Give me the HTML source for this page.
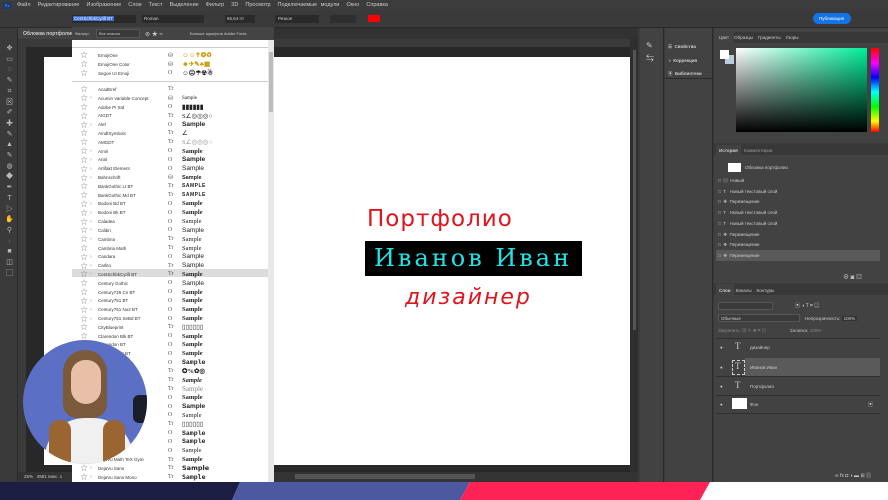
<!DOCTYPE html>
<html><head><meta charset="utf-8"><style>
*{margin:0;padding:0;box-sizing:border-box}
body{width:888px;height:500px;overflow:hidden;background:#282828;font-family:"Liberation Sans","Noto Sans CJK SC",sans-serif;position:relative;color:#ddd}
.a{position:absolute}
.t{font-size:5px;color:#ccc;white-space:nowrap}
.row{height:8.82px;display:flex;align-items:center;font-size:4.5px;color:#333;white-space:nowrap}
.row .s{width:12px;text-align:center;font-size:7px;color:#777;margin-left:6px}
.row .c{width:8px;color:#888;font-size:5px}
.row .n{width:70px}
.row .i{width:14px;font-size:6px;color:#555;font-family:"Liberation Serif",serif}
.row .p{font-family:"Liberation Serif",serif;font-size:6.5px;font-weight:bold;color:#222}
</style></head><body>
<div class="a" style="left:0;top:0;width:888px;height:11px;background:#3c3c3c"></div>
<div class="a" style="left:3px;top:2px;width:8px;height:7px;background:#1c3a6e;color:#5af;font-size:4px;text-align:center;line-height:7px">Ps</div>
<div class="a t" style="left:17px;top:2px;font-size:5.5px;word-spacing:2px">Файл &nbsp;Редактирование &nbsp;Изображение &nbsp;Слои &nbsp;Текст &nbsp;Выделение &nbsp;Фильтр &nbsp;3D &nbsp;Просмотр &nbsp;Подключаемые модули &nbsp;Окно &nbsp;Справка</div>
<div class="a" style="left:0;top:11px;width:888px;height:17px;background:#3a3a3a;border-bottom:1px solid #2a2a2a"></div>
<div class="a" style="left:72px;top:15px;width:64px;height:8px;background:#2a2a2a"></div>
<div class="a t" style="left:73px;top:16px;background:#3a6fd0;color:#fff;font-size:4.5px;padding:0 1px">CentSchbkCyrill BT</div>
<div class="a" style="left:142px;top:15px;width:62px;height:8px;background:#2a2a2a"></div>
<div class="a t" style="left:144px;top:16px;font-size:4.5px">Roman</div>
<div class="a" style="left:225px;top:15px;width:30px;height:8px;background:#2a2a2a"></div>
<div class="a t" style="left:227px;top:16px;font-size:4.5px">65,64 пт</div>
<div class="a" style="left:275px;top:15px;width:44px;height:8px;background:#2a2a2a"></div>
<div class="a t" style="left:278px;top:16px;font-size:4.5px">Резкое</div>
<div class="a" style="left:330px;top:15px;width:26px;height:8px;background:#2e2e2e"></div>
<div class="a" style="left:368px;top:15px;width:12px;height:7px;background:#f00"></div>
<div class="a" style="left:813px;top:13px;width:38px;height:11px;border-radius:6px;background:#1473e6"></div>
<div class="a t" style="left:819px;top:16px;color:#fff;font-size:4.5px">Публикация</div>
<div class="a" style="left:18px;top:28px;width:620px;height:11px;background:#323232"></div>
<div class="a" style="left:18px;top:28px;width:60px;height:11px;background:#444"></div>
<div class="a t" style="left:23px;top:31px;font-size:5px;font-weight:bold">Обложка портфолио</div>
<div class="a" style="left:18px;top:39px;width:620px;height:8px;background:#3a3a3a"></div>
<div class="a" style="left:18px;top:47px;width:8px;height:433px;background:#3a3a3a"></div>
<div class="a" style="left:0;top:28px;width:18px;height:454px;background:#3a3a3a;border-right:1px solid #2a2a2a"></div>
<div class="a" style="left:5px;top:44px;width:9px;height:290px;color:#bbb;font-size:7px;line-height:10.7px;text-align:center">✥<br>▭<br>◌<br>✎<br>⌗<br>⊠<br>✐<br>✚<br>✎<br>▲<br>✎<br>◍<br>◆<br>✒<br>T<br>▷<br>✋<br>⚲<br>·<br>■<br>◫<br>▢</div>
<div class="a" style="left:44px;top:57px;width:586px;height:408px;background:#fff"></div>
<div class="a" style="left:630px;top:39px;width:8px;height:443px;background:#2e2e2e"></div>
<div class="a" style="left:633px;top:50px;width:3px;height:280px;background:#555"></div>
<div class="a" style="left:18px;top:472px;width:620px;height:10px;background:#333"></div>
<div class="a" style="left:295px;top:474px;width:180px;height:5px;background:#555"></div>
<div class="a t" style="left:24px;top:474px;font-size:4.5px">25% &nbsp; 4961 пикс. x</div>
<div class="a" style="left:367px;top:204px;font-family:'DejaVu Sans',sans-serif;font-size:23px;color:#e0141c;letter-spacing:1px;line-height:30px">Портфолио</div>
<div class="a" style="left:365px;top:241px;width:217px;height:35px;background:#000"></div>
<div class="a" style="left:374px;top:242px;font-family:'DejaVu Serif',serif;font-size:24px;color:#21e3e6;letter-spacing:3px;line-height:33px">Иванов Иван</div>
<div class="a" style="left:405px;top:283px;font-family:'DejaVu Sans',sans-serif;font-size:22px;font-style:italic;color:#e0141c;letter-spacing:2px;line-height:30px">дизайнер</div>
<div class="a" style="left:72px;top:27px;width:202px;height:13px;background:#444"></div>
<div class="a t" style="left:75px;top:31px;font-size:4px">Фильтр:</div>
<div class="a" style="left:96px;top:29px;width:44px;height:9px;background:#3a3a3a;border:1px solid #555"></div>
<div class="a t" style="left:99px;top:31px;font-size:4px">Все классы</div>
<div class="a t" style="left:145px;top:29px;font-size:6px">⊚ ★ ≈</div>
<div class="a t" style="left:190px;top:31px;font-size:4px">Больше шрифтов Adobe Fonts</div>
<div class="a" style="left:72px;top:40px;width:196px;height:442px;background:#fff"></div>
<div class="a" style="left:268px;top:40px;width:6px;height:442px;background:#e8e8e8"></div>
<div class="a" style="left:269px;top:52px;width:4px;height:60px;background:#bbb"></div>
<div class="a" style="left:72px;top:47px;width:196px;height:1px;background:#ccc"></div>
<div class="a" style="left:72px;top:81px;width:196px;height:1px;background:#ccc"></div>
<div class="a" style="left:72px;top:268.5px;width:196px;height:8.8px;background:#dcdcdc"></div>
<div class="a" style="left:72px;top:51px;width:196px">
<div class="row"><span class="s">☆</span><span class="c"></span><span class="n">EmojiOne</span><span class="i">⛁</span><span class="p" style="color:#c90">☺☺✝❂♻</span></div>
<div class="row"><span class="s">☆</span><span class="c"></span><span class="n">EmojiOne Color</span><span class="i">⛁</span><span class="p" style="color:#c90">☻✈✎♣▦</span></div>
<div class="row"><span class="s">☆</span><span class="c"></span><span class="n">Segoe UI Emoji</span><span class="i">O</span><span class="p">☺☹☂☢☃</span></div>
</div>
<div class="a" style="left:72px;top:85px;width:196px">
<div class="row"><span class="s">☆</span><span class="c"></span><span class="n">AcadEref</span><span class="i">Tr</span><span class="p"></span></div>
<div class="row"><span class="s">☆</span><span class="c">›</span><span class="n">Acumin Variable Concept</span><span class="i">⛁</span><span class="p" style="font-weight:normal;font-size:5px">Sample</span></div>
<div class="row"><span class="s">☆</span><span class="c"></span><span class="n">Adobe Pi Std</span><span class="i">O</span><span class="p">▮▮▮▮▮▮</span></div>
<div class="row"><span class="s">☆</span><span class="c"></span><span class="n">AIGDT</span><span class="i">Tr</span><span class="p" style="font-weight:normal">S∠◎◎◎○</span></div>
<div class="row"><span class="s">☆</span><span class="c">›</span><span class="n">Alef</span><span class="i">O</span><span class="p" style="font-family:'Liberation Sans'">Sample</span></div>
<div class="row"><span class="s">☆</span><span class="c"></span><span class="n">AmdtSymbols</span><span class="i">Tr</span><span class="p" style="font-weight:normal">∠</span></div>
<div class="row"><span class="s">☆</span><span class="c"></span><span class="n">AMGDT</span><span class="i">Tr</span><span class="p" style="font-weight:normal;color:#999">S∠◎◎◎○</span></div>
<div class="row"><span class="s">☆</span><span class="c">›</span><span class="n">Amiri</span><span class="i">O</span><span class="p">Sample</span></div>
<div class="row"><span class="s">☆</span><span class="c">›</span><span class="n">Arial</span><span class="i">O</span><span class="p" style="font-family:'Liberation Sans'">Sample</span></div>
<div class="row"><span class="s">☆</span><span class="c">›</span><span class="n">Artifakt Element</span><span class="i">O</span><span class="p" style="font-family:'Liberation Sans';font-weight:normal">Sample</span></div>
<div class="row"><span class="s">☆</span><span class="c">›</span><span class="n">Bahnschrift</span><span class="i">⛁</span><span class="p" style="font-family:'Liberation Sans';font-size:5.5px">Sample</span></div>
<div class="row"><span class="s">☆</span><span class="c"></span><span class="n">BankGothic Lt BT</span><span class="i">Tr</span><span class="p" style="font-family:'Liberation Sans';font-size:5px;letter-spacing:.5px">SAMPLE</span></div>
<div class="row"><span class="s">☆</span><span class="c"></span><span class="n">BankGothic Md BT</span><span class="i">Tr</span><span class="p" style="font-family:'Liberation Sans';font-size:5px;letter-spacing:.5px">SAMPLE</span></div>
<div class="row"><span class="s">☆</span><span class="c">›</span><span class="n">Bodoni Bd BT</span><span class="i">O</span><span class="p">Sample</span></div>
<div class="row"><span class="s">☆</span><span class="c">›</span><span class="n">Bodoni Bk BT</span><span class="i">O</span><span class="p">Sample</span></div>
<div class="row"><span class="s">☆</span><span class="c">›</span><span class="n">Caladea</span><span class="i">O</span><span class="p" style="font-weight:normal">Sample</span></div>
<div class="row"><span class="s">☆</span><span class="c">›</span><span class="n">Calibri</span><span class="i">O</span><span class="p" style="font-family:'Liberation Sans';font-weight:normal">Sample</span></div>
<div class="row"><span class="s">☆</span><span class="c">›</span><span class="n">Cambria</span><span class="i">Tr</span><span class="p" style="font-weight:normal">Sample</span></div>
<div class="row"><span class="s">☆</span><span class="c"></span><span class="n">Cambria Math</span><span class="i">Tr</span><span class="p" style="font-weight:normal">Sample</span></div>
<div class="row"><span class="s">☆</span><span class="c">›</span><span class="n">Candara</span><span class="i">O</span><span class="p" style="font-family:'Liberation Sans';font-weight:normal">Sample</span></div>
<div class="row"><span class="s">☆</span><span class="c">›</span><span class="n">Carlito</span><span class="i">Tr</span><span class="p" style="font-family:'Liberation Sans';font-weight:normal">Sample</span></div>
<div class="row"><span class="s">☆</span><span class="c">›</span><span class="n">CentSchbkCyrill BT</span><span class="i">Tr</span><span class="p">Sample</span></div>
<div class="row"><span class="s">☆</span><span class="c"></span><span class="n">Century Gothic</span><span class="i">O</span><span class="p" style="font-family:'Liberation Sans';font-weight:normal">Sample</span></div>
<div class="row"><span class="s">☆</span><span class="c"></span><span class="n">Century725 Cn BT</span><span class="i">O</span><span class="p">Sample</span></div>
<div class="row"><span class="s">☆</span><span class="c">›</span><span class="n">Century751 BT</span><span class="i">O</span><span class="p">Sample</span></div>
<div class="row"><span class="s">☆</span><span class="c">›</span><span class="n">Century751 No2 BT</span><span class="i">O</span><span class="p">Sample</span></div>
<div class="row"><span class="s">☆</span><span class="c">›</span><span class="n">Century751 SeBd BT</span><span class="i">O</span><span class="p">Sample</span></div>
<div class="row"><span class="s">☆</span><span class="c"></span><span class="n">CityBlueprint</span><span class="i">Tr</span><span class="p" style="font-weight:normal">▯▯▯▯▯▯</span></div>
<div class="row"><span class="s">☆</span><span class="c"></span><span class="n">Clarendon Blk BT</span><span class="i">O</span><span class="p">Sample</span></div>
<div class="row"><span class="s">☆</span><span class="c"></span><span class="n">Clarendon BT</span><span class="i">O</span><span class="p">Sample</span></div>
<div class="row"><span class="s">☆</span><span class="c"></span><span class="n">Clarendon Lt BT</span><span class="i">O</span><span class="p">Sample</span></div>
<div class="row"><span class="s">☆</span><span class="c">›</span><span class="n">Consolas</span><span class="i">O</span><span class="p" style="font-family:'Liberation Mono'">Sample</span></div>
<div class="row"><span class="s">☆</span><span class="c"></span><span class="n">Dingbats</span><span class="i">Tr</span><span class="p">✪%✿◎</span></div>
<div class="row"><span class="s">☆</span><span class="c"></span><span class="n">Cursive</span><span class="i">Tr</span><span class="p" style="font-style:italic">Sample</span></div>
<div class="row"><span class="s">☆</span><span class="c"></span><span class="n">Compass</span><span class="i">Tr</span><span class="p" style="font-weight:normal;color:#888;font-size:7px">Sample</span></div>
<div class="row"><span class="s">☆</span><span class="c">›</span><span class="n">Constantia</span><span class="i">O</span><span class="p">Sample</span></div>
<div class="row"><span class="s">☆</span><span class="c">›</span><span class="n">Corbel</span><span class="i">O</span><span class="p" style="font-family:'Liberation Sans'">Sample</span></div>
<div class="row"><span class="s">☆</span><span class="c">›</span><span class="n">Courier</span><span class="i">O</span><span class="p" style="font-weight:normal">Sample</span></div>
<div class="row"><span class="s">☆</span><span class="c"></span><span class="n">Complex</span><span class="i">Tr</span><span class="p" style="font-weight:normal">▯▯▯▯▯▯</span></div>
<div class="row"><span class="s">☆</span><span class="c">›</span><span class="n">Courier New</span><span class="i">O</span><span class="p" style="font-family:'Liberation Mono'">Sample</span></div>
<div class="row"><span class="s">☆</span><span class="c"></span><span class="n">Courier Std</span><span class="i">O</span><span class="p" style="font-family:'Liberation Mono'">Sample</span></div>
<div class="row"><span class="s">☆</span><span class="c"></span><span class="n">David</span><span class="i">O</span><span class="p" style="font-weight:normal">Sample</span></div>
<div class="row"><span class="s">☆</span><span class="c"></span><span class="n">DejaVu Math TeX Gyre</span><span class="i">Tr</span><span class="p">Sample</span></div>
<div class="row"><span class="s">☆</span><span class="c">›</span><span class="n">DejaVu Sans</span><span class="i">Tr</span><span class="p" style="font-family:'DejaVu Sans'">Sample</span></div>
<div class="row"><span class="s">☆</span><span class="c">›</span><span class="n">DejaVu Sans Mono</span><span class="i">Tr</span><span class="p" style="font-family:'DejaVu Sans Mono'">Sample</span></div>
</div>
<div class="a" style="left:23px;top:340px;width:124px;height:124px;border-radius:50%;background:#5b6fc4;overflow:hidden">
 <div class="a" style="left:110px;top:55px;width:20px;height:28px;border-radius:6px;background:#1a1e2a"></div>
 <div class="a" style="left:22px;top:78px;width:88px;height:60px;border-radius:40px 40px 0 0;background:#f0f0f0"></div>
 <div class="a" style="left:26px;top:80px;width:22px;height:50px;border-radius:10px;background:#9a6530"></div>
 <div class="a" style="left:80px;top:80px;width:22px;height:50px;border-radius:10px;background:#9a6530"></div>
 <div class="a" style="left:40px;top:10px;width:44px;height:68px;border-radius:22px 22px 14px 14px;background:#7a5a3a"></div>
 <div class="a" style="left:48px;top:20px;width:30px;height:44px;border-radius:15px 15px 16px 16px;background:#e8c0a8"></div>
</div>
<div class="a" style="left:638px;top:28px;width:250px;height:454px;background:#3a3a3a"></div>
<div class="a" style="left:640px;top:28px;width:24px;height:454px;background:#424242;border-right:1px solid #2a2a2a"></div>
<div class="a t" style="left:646px;top:39px;font-size:8px;line-height:13px">✎<br>⇆</div>
<div class="a" style="left:665px;top:28px;width:48px;height:454px;background:#424242;border-right:1px solid #2a2a2a"></div>
<div class="a" style="left:665px;top:78px;width:48px;height:1px;background:#2a2a2a"></div>
<div class="a t" style="left:668px;top:40px;font-size:4.5px;line-height:13.5px;font-weight:bold">☰ &nbsp;Свойства<br>◑ &nbsp;Коррекция<br>▣ &nbsp;Библиотеки</div>
<div class="a" style="left:714px;top:28px;width:174px;height:115px;background:#424242"></div>
<div class="a" style="left:714px;top:32px;width:174px;height:11px;background:#383838"></div>
<div class="a" style="left:714px;top:32px;width:20px;height:11px;background:#424242"></div>
<div class="a t" style="left:719px;top:35px;font-size:4.5px">Цвет &nbsp; &nbsp;Образцы &nbsp; &nbsp;Градиенты &nbsp; &nbsp;Узоры</div>
<div class="a" style="left:725px;top:55px;width:9px;height:9px;background:#bcd"></div>
<div class="a" style="left:720px;top:50px;width:9px;height:9px;background:#fff"></div>
<div class="a" style="left:736px;top:48px;width:131px;height:84px;background:linear-gradient(to top,#000,rgba(0,0,0,0)),linear-gradient(to right,#fff,#00ef9a)"></div>
<div class="a" style="left:871px;top:48px;width:8px;height:84px;background:linear-gradient(#f00,#f0f 18%,#00f 35%,#0ff 52%,#0f0 70%,#ff0 87%,#f00)"></div>
<div class="a" style="left:714px;top:145px;width:174px;height:10px;background:#383838"></div>
<div class="a" style="left:716px;top:145px;width:25px;height:10px;background:#424242"></div>
<div class="a t" style="left:719px;top:148px;font-size:4.5px;font-weight:bold">История &nbsp; &nbsp; <span style="font-weight:normal;color:#999">Комментарии</span></div>
<div class="a" style="left:714px;top:155px;width:174px;height:128px;background:#424242"></div>
<div class="a" style="left:728px;top:163px;width:13px;height:9px;background:#fff"></div>
<div class="a t" style="left:745px;top:165px;font-size:4.5px">Обложка портфолио</div>
<div class="a" style="left:716px;top:250px;width:164px;height:11px;background:#595959"></div>
<div class="a t" style="left:718px;top:176px;font-size:4.5px;line-height:10.7px">□ &nbsp;▤ &nbsp;Новый<br>□ &nbsp;T &nbsp; Новый текстовый слой<br>□ &nbsp;✥ &nbsp;Перемещение<br>□ &nbsp;T &nbsp; Новый текстовый слой<br>□ &nbsp;T &nbsp; Новый текстовый слой<br>□ &nbsp;✥ &nbsp;Перемещение<br>□ &nbsp;✥ &nbsp;Перемещение<br>□ &nbsp;✥ &nbsp;Перемещение</div>
<div class="a t" style="left:843px;top:272px;font-size:6px">⊕ ◙ ▥</div>
<div class="a" style="left:714px;top:284px;width:174px;height:11px;background:#383838"></div>
<div class="a" style="left:716px;top:284px;width:18px;height:11px;background:#424242"></div>
<div class="a t" style="left:719px;top:288px;font-size:4.5px"><b>Слои</b> &nbsp; &nbsp;Каналы &nbsp; &nbsp;Контуры</div>
<div class="a" style="left:714px;top:295px;width:174px;height:187px;background:#424242"></div>
<div class="a" style="left:718px;top:302px;width:55px;height:8px;background:#3a3a3a;border:1px solid #555"></div>
<div class="a t" style="left:795px;top:302px;font-size:5px">▣ ◑ T ⌗ ▤</div>
<div class="a" style="left:718px;top:314px;width:82px;height:8px;background:#3a3a3a;border:1px solid #555"></div>
<div class="a t" style="left:721px;top:316px;font-size:4.5px">Обычные</div>
<div class="a t" style="left:805px;top:316px;font-size:4.5px">Непрозрачность: <span style="background:#333;padding:0 2px">100%</span></div>
<div class="a t" style="left:718px;top:328px;font-size:4.5px;color:#888">Закрепить: ▦ ✎ ✥ ⌗ ▤ &nbsp; &nbsp; &nbsp; &nbsp; &nbsp; &nbsp; &nbsp; &nbsp; &nbsp; <span style="color:#bbb">Заливка:</span> 100%</div>
<div class="a" style="left:716px;top:338px;width:164px;height:1px;background:#2f2f2f"></div>
<div class="a" style="left:745px;top:358px;width:135px;height:18px;background:#5a5a5a"></div>
<div class="a" style="left:716px;top:376px;width:164px;height:1px;background:#2f2f2f"></div>
<div class="a" style="left:716px;top:395px;width:164px;height:1px;background:#2f2f2f"></div>
<div class="a" style="left:716px;top:413px;width:164px;height:1px;background:#2f2f2f"></div>
<div class="a t" style="left:720px;top:345px;font-size:4.5px">●</div>
<div class="a t" style="left:735px;top:341px;font-size:9px;font-family:'Liberation Serif'">T</div>
<div class="a t" style="left:750px;top:345px;font-size:4.5px">дизайнер</div>
<div class="a t" style="left:720px;top:365px;font-size:4.5px">●</div>
<div class="a" style="left:732px;top:360px;width:13px;height:15px;border:1px dashed #ccc"></div>
<div class="a t" style="left:735px;top:361px;font-size:9px;font-family:'Liberation Serif'">T</div>
<div class="a t" style="left:750px;top:365px;font-size:4.5px">Иванов Иван</div>
<div class="a t" style="left:720px;top:384px;font-size:4.5px">●</div>
<div class="a t" style="left:735px;top:380px;font-size:9px;font-family:'Liberation Serif'">T</div>
<div class="a t" style="left:750px;top:384px;font-size:4.5px">Портфолио</div>
<div class="a t" style="left:720px;top:402px;font-size:4.5px">●</div>
<div class="a" style="left:732px;top:398px;width:15px;height:11px;background:#fff"></div>
<div class="a t" style="left:750px;top:402px;font-size:4.5px">Фон</div>
<div class="a t" style="left:868px;top:401px;font-size:5px">▣</div>
<div class="a t" style="left:835px;top:472px;font-size:5px">∞ fx ◘ ◑ ▬ ⊞ ▥</div>
<svg class="a" style="left:0;top:482px" width="888" height="18">
<rect width="888" height="18" fill="#fff"/>
<polygon points="0,0 240,0 232,18 0,18" fill="#1b1d43"/>
<polygon points="240,0 470,0 460,18 232,18" fill="#4c589f"/>
<polygon points="470,0 710,0 700,18 460,18" fill="#fe2255"/>
</svg>
</body></html>
